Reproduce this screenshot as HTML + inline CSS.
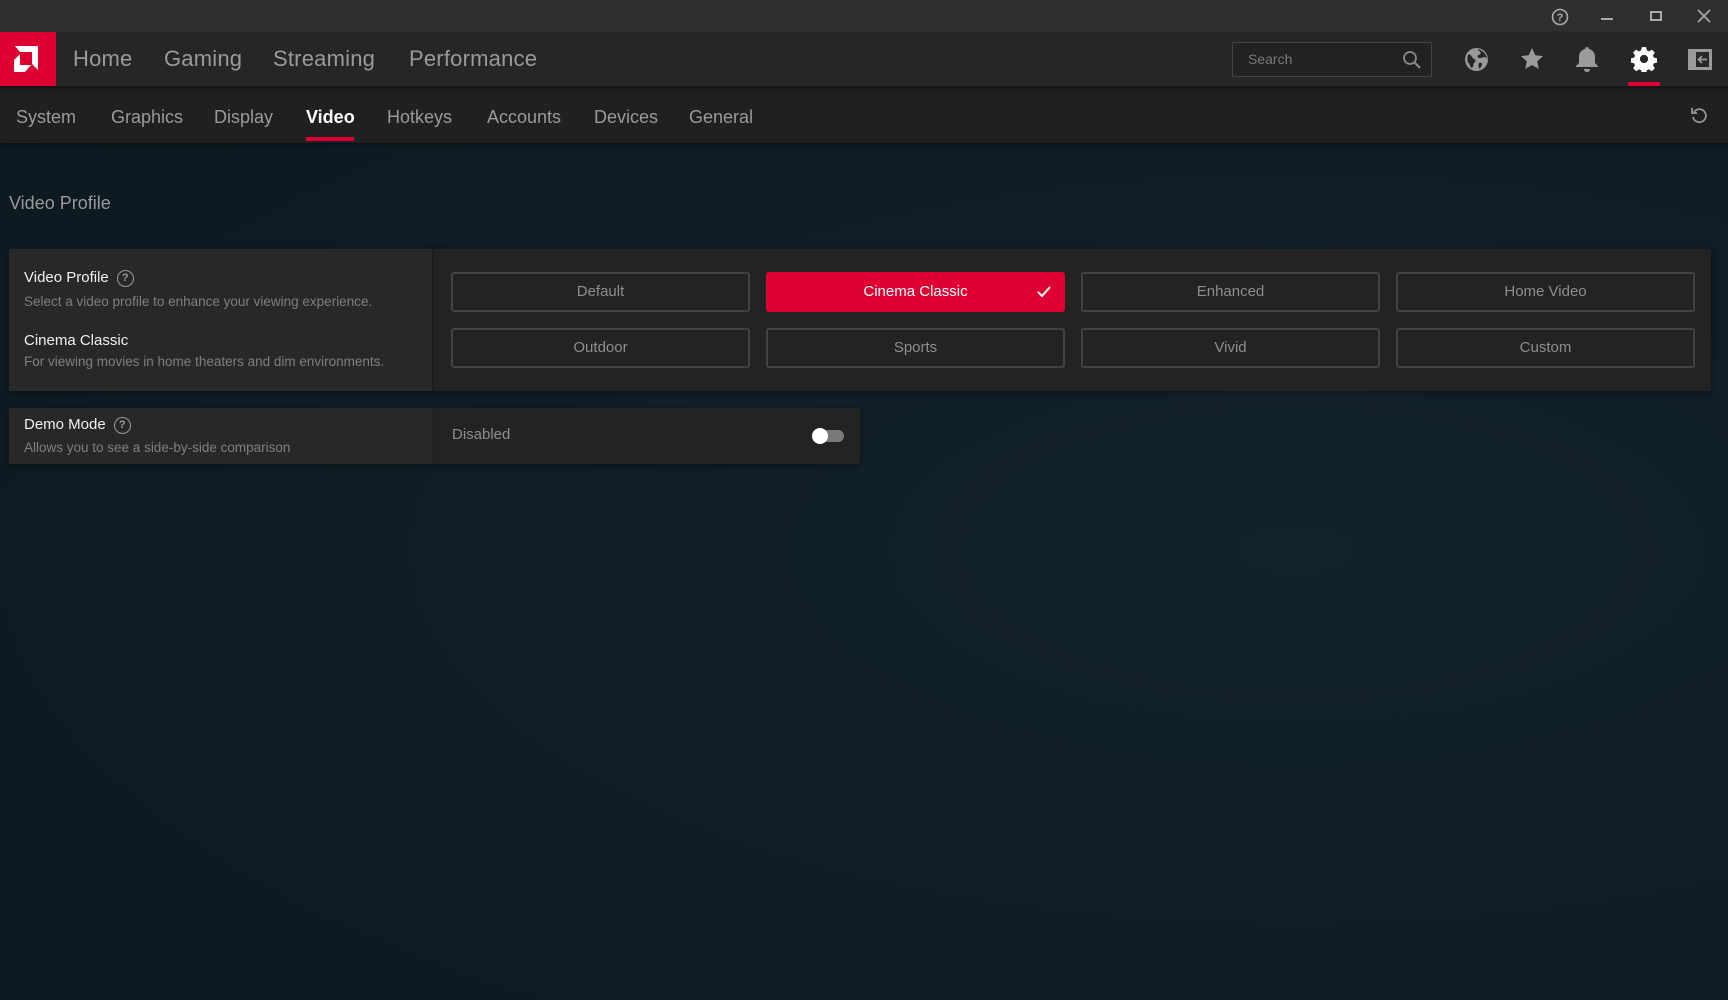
<!DOCTYPE html>
<html><head><meta charset="utf-8"><style>
*{margin:0;padding:0;box-sizing:border-box}
body{width:1728px;height:1000px;overflow:hidden;font-family:"Liberation Sans",sans-serif;background:radial-gradient(ellipse at 75% 55%,#12232c 0%,#0f1d26 45%,#0c1820 100%);position:relative}
.abs{position:absolute}
#title{left:0;top:0;width:1728px;height:32px;background:#2f2f2f}
#nav{left:0;top:32px;width:1728px;height:54px;background:#262626;box-shadow:0 2px 4px rgba(0,0,0,.5);z-index:2}
#sub{left:0;top:86px;width:1728px;height:57px;background:#202020;box-shadow:0 2px 4px rgba(0,0,0,.4)}
.nt{position:absolute;font-size:22px;color:#9a9a9a;line-height:24px;letter-spacing:.2px}
.st{position:absolute;font-size:18px;color:#9a9a9a;line-height:20px}
.panel{background:#232323;box-shadow:0 2px 6px rgba(0,0,0,.4);border-radius:2px}
.left{background:#282828}
.btn{position:absolute;height:40px;width:299px;border:2px solid #424242;border-radius:3px;color:#8e8e8e;font-size:15px;text-align:center;line-height:36px;background:#232323}
.lbl{position:absolute;color:#f0f0f0;font-size:15px}
.desc{position:absolute;color:#7f7f7f;font-size:13.5px}
.q{display:inline-block;width:17px;height:17px;border:1.5px solid #9a9a9a;border-radius:50%;color:#9a9a9a;font-size:11px;text-align:center;line-height:14px;font-weight:bold;vertical-align:middle;margin-left:8px}
</style></head><body>
<div id="title" class="abs"></div>
<svg class="abs" style="left:1550px;top:7px" width="20" height="20" viewBox="0 0 20 20"><circle cx="10" cy="10" r="7.5" fill="none" stroke="#aaa" stroke-width="1.6"/><text x="10" y="14" font-size="11" font-weight="bold" fill="#aaa" text-anchor="middle" font-family="Liberation Sans">?</text></svg>
<div class="abs" style="left:1601px;top:18px;width:12px;height:2px;background:#aaa"></div>
<div class="abs" style="left:1650px;top:11px;width:12px;height:10px;border:2px solid #aaa"></div>
<svg class="abs" style="left:1697px;top:9px" width="14" height="14"><path d="M1 1L13 13M13 1L1 13" stroke="#aaa" stroke-width="1.8"/></svg>

<div id="nav" class="abs">
<div class="abs" style="left:0;top:0;width:56px;height:54px;background:#dd0031">
<svg width="56" height="54" viewBox="0 0 56 54"><path d="M15 14H38V38L32 32V20H20Z" fill="#fff"/><path d="M14 28L20 22V33H31L25 40H14Z" fill="#fff"/></svg></div>
<div class="nt" style="left:73px;top:15px">Home</div>
<div class="nt" style="left:164px;top:15px">Gaming</div>
<div class="nt" style="left:273px;top:15px">Streaming</div>
<div class="nt" style="left:409px;top:15px">Performance</div>
<div class="abs" style="left:1232px;top:10px;width:200px;height:35px;border:1.5px solid #444;background:#222;border-radius:2px"><span style="position:absolute;left:15px;top:8px;color:#7a7a7a;font-size:14px">Search</span>
<svg style="position:absolute;right:9px;top:7px" width="20" height="20"><circle cx="8" cy="8" r="6" fill="none" stroke="#8a8a8a" stroke-width="1.8"/><path d="M12.5 12.5L18 18" stroke="#8a8a8a" stroke-width="2"/></svg></div>
<svg class="abs" style="left:1464px;top:15px" width="25" height="25" viewBox="0 0 24 24"><circle cx="12" cy="12" r="11" fill="#9a9a9a"/><path d="M4 7c2 0 3 1 4 3s3 1 3 3-2 2-2 4-1 3-2 3c-2-2-1-4-3-5-1-1-1-5 0-8zM13 2c1 2 3 2 3 4s-3 1-3 3 3 2 5 1 3 0 4 2c0-5-4-9-9-10zM15 15c2 0 3 1 2 3l-2 3c-1-2-2-4 0-6z" fill="#262626"/></svg>
<svg class="abs" style="left:1520px;top:15px" width="24" height="24" viewBox="0 0 24 24"><path d="M12 1l3.3 7.3 7.7.8-5.8 5.2 1.7 7.7L12 18l-6.9 4 1.7-7.7L1 9.1l7.7-.8z" fill="#9a9a9a"/></svg>
<svg class="abs" style="left:1575px;top:14px" width="24" height="26" viewBox="0 0 24 26"><path d="M12 1c1 0 2 1 2 2 4 1 6 4 6 8v6l3 3v1H1v-1l3-3v-6c0-4 2-7 6-8 0-1 1-2 2-2z" fill="#9a9a9a"/><path d="M9 23h6c0 2-1.5 3-3 3s-3-1-3-3z" fill="#9a9a9a"/></svg>
<svg class="abs" style="left:1631px;top:14px" width="26" height="26" viewBox="0 0 24 24"><path d="M10 1h4l.6 3 2 1 2.6-1.7 2.8 2.8-1.7 2.6.8 2 3 .6v4l-3 .6-.8 2 1.7 2.6-2.8 2.8-2.6-1.7-2 .8-.6 3h-4l-.6-3-2-.8-2.6 1.7-2.8-2.8 1.7-2.6-.8-2-3-.6v-4l3-.6.8-2L1.9 6.1l2.8-2.8 2.6 1.7 2-1z" fill="#fff"/><circle cx="12" cy="12" r="3.8" fill="#262626"/></svg>
<div class="abs" style="left:1628px;top:50px;width:32px;height:4px;background:#dd0031"></div>
<svg class="abs" style="left:1688px;top:17px" width="24" height="21" viewBox="0 0 24 21"><rect x="0" y="0" width="24" height="21" fill="#9a9a9a"/><rect x="8" y="3" width="13" height="15" fill="#262626"/><path d="M19 10.5H11M14 7l-3.5 3.5L14 14" stroke="#9a9a9a" stroke-width="1.8" fill="none"/></svg>
</div>

<div id="sub" class="abs">
<div class="st" style="left:16px;top:21px">System</div>
<div class="st" style="left:111px;top:21px">Graphics</div>
<div class="st" style="left:214px;top:21px">Display</div>
<div class="st" style="left:306px;top:21px;color:#fff;font-weight:bold">Video</div>
<div class="st" style="left:387px;top:21px">Hotkeys</div>
<div class="st" style="left:487px;top:21px">Accounts</div>
<div class="st" style="left:594px;top:21px">Devices</div>
<div class="st" style="left:689px;top:21px">General</div>
<div class="abs" style="left:306px;top:51px;width:48px;height:4px;background:#dd0031"></div>
<svg class="abs" style="left:1690px;top:20px" width="18" height="18" viewBox="0 0 18 18"><path d="M4 6A6.5 6.5 0 1 1 3 11" fill="none" stroke="#9a9a9a" stroke-width="1.7"/><path d="M2 2v5h5" fill="none" stroke="#9a9a9a" stroke-width="1.7"/></svg>
</div>

<div class="abs" style="left:9px;top:193px;color:#9a9a9a;font-size:18px">Video Profile</div>

<div class="abs panel" style="left:9px;top:249px;width:1702px;height:142px">
<div class="abs left" style="left:0;top:0;width:424px;height:142px;border-right:1px solid #1b1b1b"></div>
</div>
<div class="lbl" style="left:24px;top:269px">Video Profile<span class="q">?</span></div>
<div class="desc" style="left:24px;top:294px">Select a video profile to enhance your viewing experience.</div>
<div class="lbl" style="left:24px;top:332px">Cinema Classic</div>
<div class="desc" style="left:24px;top:354px">For viewing movies in home theaters and dim environments.</div>

<div class="btn" style="left:451px;top:272px">Default</div>
<div class="btn" style="left:766px;top:272px;background:#dd0031;border-color:#dd0031;color:#fff">Cinema Classic<svg style="position:absolute;right:12px;top:12px" width="14" height="12"><path d="M1 6l4 4 8-9" stroke="#fff" stroke-width="2" fill="none"/></svg></div>
<div class="btn" style="left:1081px;top:272px">Enhanced</div>
<div class="btn" style="left:1396px;top:272px">Home Video</div>
<div class="btn" style="left:451px;top:328px">Outdoor</div>
<div class="btn" style="left:766px;top:328px">Sports</div>
<div class="btn" style="left:1081px;top:328px">Vivid</div>
<div class="btn" style="left:1396px;top:328px">Custom</div>

<div class="abs panel" style="left:9px;top:408px;width:851px;height:56px">
<div class="abs left" style="left:0;top:0;width:425px;height:56px;border-right:1px solid #1b1b1b"></div>
</div>
<div class="lbl" style="left:24px;top:416px">Demo Mode<span class="q">?</span></div>
<div class="desc" style="left:24px;top:440px">Allows you to see a side-by-side comparison</div>
<div class="abs" style="left:452px;top:426px;color:#8e8e8e;font-size:15px">Disabled</div>
<div class="abs" style="left:814px;top:430px;width:30px;height:12px;border-radius:6px;background:#7a7a7a"></div>
<div class="abs" style="left:812px;top:428px;width:16px;height:16px;border-radius:50%;background:#fff"></div>
</body></html>
